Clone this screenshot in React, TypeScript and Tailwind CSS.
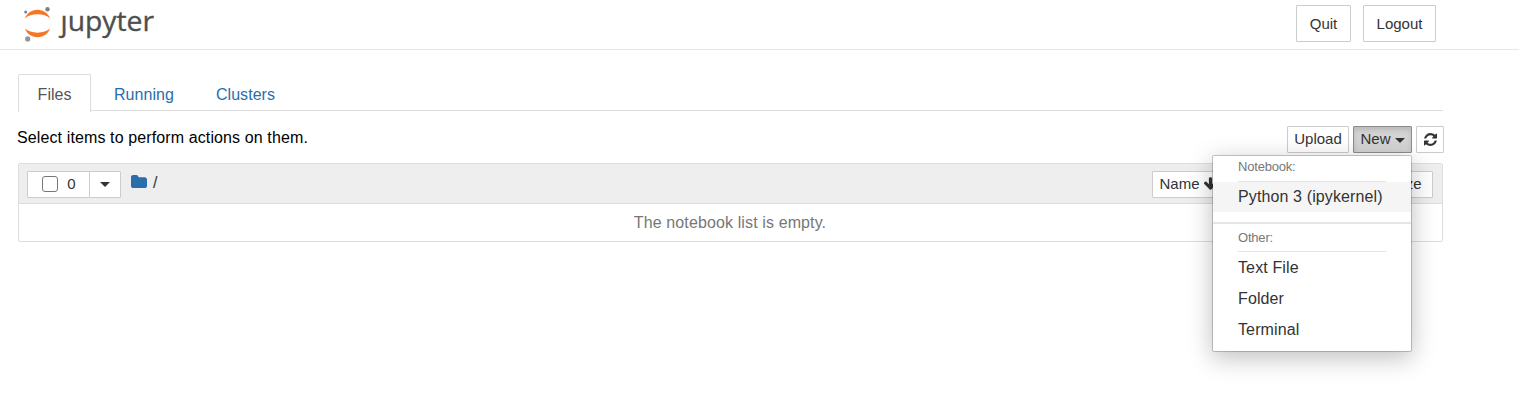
import type { ReactNode } from "react";

const BTN =
  "flex items-center justify-center border border-[#ccc] bg-white text-[#333] rounded-[1px] whitespace-nowrap";

function Caret({ className = "" }: { className?: string }) {
  return (
    <svg className={className} width="10" height="5" viewBox="0 0 10 5" fill="currentColor">
      <path d="M0 0h10L5 5z" />
    </svg>
  );
}

function Logo() {
  return (
    <svg width="136" height="42" viewBox="0 0 136 42" className="block" role="img" aria-label="jupyter">
      <path d="M3 18.400C4.600 13.200 9.400 9.700 15.500 9.700s10.900 3.500 12.500 8.700c-2.800-2.800-7.400-4.100-12.500-4.100S5.800 15.600 3 18.400z" fill="#f37726" />
      <path d="M3 28.600c1.600 5.200 6.400 8.700 12.500 8.700s10.900-3.500 12.500-8.700c-2.800 2.800-7.400 4.100-12.500 4.100S5.800 31.400 3 28.600z" fill="#f37726" />
      <circle cx="25.500" cy="9.200" r="2.200" fill="#808081" />
      <circle cx="3.700" cy="12" r="1.500" fill="#808081" />
      <circle cx="5.700" cy="38.900" r="2.600" fill="#949494" />
      <text x="38.500" y="31" fill="#4e4e4e" stroke="#4e4e4e" strokeWidth="0.35" fontFamily="Open Sans, Noto Sans, sans-serif" fontSize="28" textLength="93.500" lengthAdjust="spacingAndGlyphs">
        ȷupyter
      </text>
    </svg>
  );
}

function RefreshIcon() {
  return (
    <svg width="13" height="13" viewBox="0 0 1536 1536" fill="currentColor" className="-mt-px">
      <path d="M1511 928q0 5-1 7-64 268-268 434.5T764 1536q-146 0-282.500-55T238 1324l-129 129q-19 19-45 19t-45-19-19-45V960q0-26 19-45t45-19h448q26 0 45 19t19 45-19 45l-137 137q71 66 161 102t187 36q134 0 250-65t186-179q11-17 53-117 8-23 30-23h192q13 0 22.500 9.500t9.500 22.500zm25-800v448q0 26-19 45t-45 19h-448q-26 0-45-19t-19-45 19-45l138-138Q969 256 768 256q-134 0-250 65T332 500q-11 17-53 117-8 23-30 23H50q-13 0-22.500-9.500T18 608v-7q65-268 270-434.500T768 0q146 0 284 55.500T1297 212l130-129q19-19 45-19t45 19 19 45z" />
    </svg>
  );
}

function FolderIcon() {
  return (
    <svg width="16" height="13" viewBox="0 128 1664 1408" preserveAspectRatio="none" fill="#296eaa">
      <path d="M1664 608v704q0 92-66 158t-158 66H224q-92 0-158-66T0 1312V352q0-92 66-158t158-66h320q92 0 158 66t66 158v32h672q92 0 158 66t66 158z" />
    </svg>
  );
}

function ArrowDownIcon() {
  return (
    <svg width="13" height="13" viewBox="53 128 1558 1483" fill="currentColor" className="-mt-0.5 shrink-0">
      <path d="M1611 832q0 53-37 90l-651 652q-39 37-91 37-53 0-90-37l-651-652q-38-36-38-90 0-53 38-91l74-75q39-37 91-37 53 0 90 37l294 294V256q0-52 38-90t90-38h128q52 0 90 38t38 90v704l294-294q37-37 90-37 52 0 91 37l75 75q37 39 37 91z" />
    </svg>
  );
}

function MenuItem({ children, active = false }: { children: ReactNode; active?: boolean }) {
  return (
    <div
      className={`flex items-center pl-[25px] text-[16px] tracking-[0.12px] text-[#333] ${active ? "h-[30px] bg-[#f5f5f5]" : "h-[31px]"}`}
    >
      {children}
    </div>
  );
}

function NewMenu() {
  return (
    <div className="absolute top-[29px] right-0 z-10 h-[197px] w-[200px] rounded-[2px] border border-black/20 bg-white bg-clip-padding shadow-[0_6px_24px_rgba(0,0,0,0.25)]">
      <div className="mr-[25px] ml-[25px] flex h-[26px] items-start border-b border-[#e5e5e5] pt-[3px] text-[13px] leading-[16px] tracking-[-0.2px] text-[#777]">
        Notebook:
      </div>
      <MenuItem active>Python 3 (ipykernel)</MenuItem>
      <div className="mt-[10px] h-[2px] bg-[#e5e5e5]" />
      <div className="mr-[25px] ml-[25px] flex h-[28px] items-start border-b border-[#e5e5e5] pt-[6px] text-[13px] leading-[16px] tracking-[-0.2px] text-[#777]">
        Other:
      </div>
      <MenuItem>Text File</MenuItem>
      <MenuItem>Folder</MenuItem>
      <MenuItem>Terminal</MenuItem>
    </div>
  );
}

export default function App() {
  return (
    <div className="h-[404px] w-full overflow-hidden bg-white font-['Liberation_Sans',Arial,sans-serif] text-[16px] text-black">
      <header className="flex h-[50px] items-start justify-between border-b border-[#e7e7e7] pr-[83px] pl-[22px]">
        <Logo />
        <div className="flex gap-3 pt-[5px] text-[15px]">
          <button className={`${BTN} h-[37px] w-[55px] pt-px`}>Quit</button>
          <button className={`${BTN} h-[37px] w-[73px] pt-px`}>Logout</button>
        </div>
      </header>

      <main className="ml-[18px] w-[1425px] pt-6">
        <nav className="flex h-[37px] border-b border-[#ddd] text-[#296eaa]">
          <div className="-mb-px flex h-[38px] w-[73px] items-center justify-center rounded-t-[2px] border border-b-0 border-[#ddd] bg-white pt-[3px] text-[#555]">
            Files
          </div>
          <div className="flex items-center pt-[5px] pl-[23px] tracking-[0.05px]">Running</div>
          <div className="flex items-center pt-[5px] pl-[42px] tracking-[0.05px]">Clusters</div>
        </nav>

        <div className="-mr-px flex h-[52px] items-start justify-between pt-[15px]">
          <div className="-ml-px pt-[2px] leading-[20px] tracking-[0.115px]">
            Select items to perform actions on them.
          </div>
          <div className="flex gap-1 text-[15px]">
            <button className={`${BTN} h-[27px] w-[62px]`}>Upload</button>
            <div className="relative">
              <button className="flex h-[27px] w-[59px] items-center justify-center gap-1 rounded-[1px] border border-[#8c8c8c] bg-[#d4d4d4] text-[#333] shadow-[inset_0_3px_5px_rgba(0,0,0,0.125)]">
                New
                <Caret className="mt-px" />
              </button>
              <NewMenu />
            </div>
            <button className={`${BTN} h-[27px] w-[28px]`} aria-label="Refresh">
              <RefreshIcon />
            </button>
          </div>
        </div>

        <section className="h-[79px] rounded-[2px] border border-[#ddd]">
          <div className="flex h-[40px] items-start justify-between border-b border-[#ddd] bg-[#eee] pt-[7px] pr-[9px] pl-2 text-[15px]">
            <div className="flex">
              <div className={`${BTN} h-[27px] w-[63px] gap-[9px] pl-px`}>
                <span className="-mt-px h-4 w-4 rounded-[3px] border border-[#767676] bg-white" />
                <span>0</span>
              </div>
              <button className={`${BTN} -ml-px h-[27px] w-[32px]`} aria-label="Select">
                <Caret />
              </button>
              <div className="ml-[10px] flex items-start gap-[6px] pt-[4px]">
                <FolderIcon />
                <span className="-mt-[2px] text-[16px] leading-[20px] text-[#333]">/</span>
              </div>
            </div>
            <div className="flex">
              <button className={`${BTN} h-[27px] w-[72px] gap-1`}>
                Name
                <ArrowDownIcon />
              </button>
              <button className={`${BTN} mx-[4px] h-[27px] w-[123px]`}>Last Modified</button>
              <button className={`${BTN} h-[27px] w-[78px]`}>File size</button>
            </div>
          </div>
          <div className="flex h-[37px] items-center justify-center text-[#777]">
            <span className="-ml-px tracking-[0.12px]">The notebook list is empty.</span>
          </div>
        </section>
      </main>
    </div>
  );
}
